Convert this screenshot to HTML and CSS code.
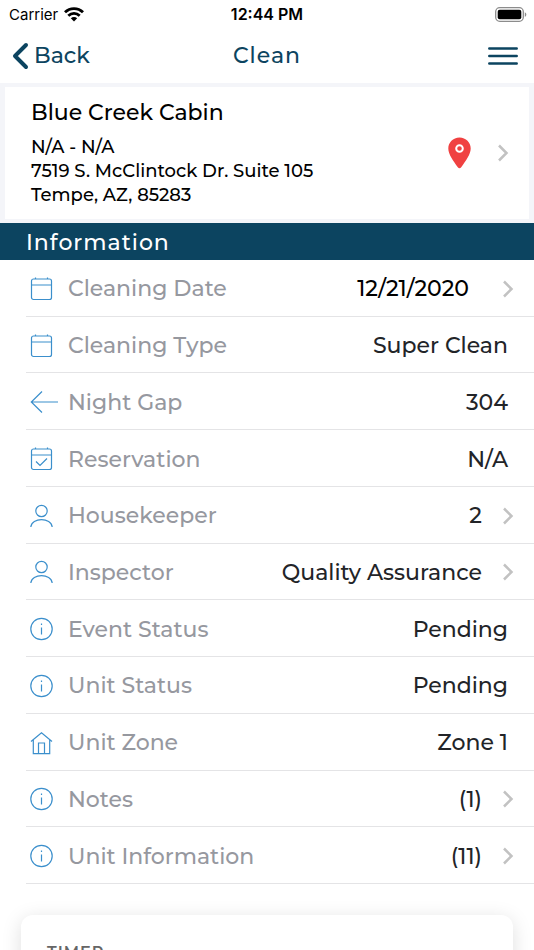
FILE: index.html
```html
<!DOCTYPE html>
<html lang="en">
<head>
    <meta charset="UTF-8">
    <meta name="viewport" content="width=device-width, initial-scale=1.0">
    <title>Clean</title>
    <link rel="stylesheet" href="styles.css">
</head>
<body>
    <!-- Shared icons -->
    <svg class="sprite" aria-hidden="true">
        <symbol id="calendar" viewBox="0 0 28 24">
            <rect x="1.500" y="2" width="20" height="20.500" rx="2"/>
            <path d="M1.500 8h20M5.500 0.500v1.500M17.500 0.500v1.500"/>
        </symbol>
        <symbol id="calendar-check" viewBox="0 0 28 24">
            <rect x="1.500" y="2" width="20" height="20.500" rx="2"/>
            <path d="M1.500 8h20M5.500 0.500v1.500M17.500 0.500v1.500M6 14.500l4 4 7-7"/>
        </symbol>
        <symbol id="arrow-left" viewBox="0 0 28 24">
            <path d="M28 12H1.500M12 1.500L1.300 12 12 22.500"/>
        </symbol>
        <symbol id="person" viewBox="0 0 28 24">
            <circle cx="11.500" cy="7" r="5.700"/>
            <path d="M0.800 23c0.800-9.800 20.600-9.800 21.400 0"/>
        </symbol>
        <symbol id="info" viewBox="0 0 28 24">
            <circle cx="11.500" cy="12" r="10.700"/>
            <path d="M11.500 10.500v7M11.500 6.500v1.600"/>
        </symbol>
        <symbol id="house" viewBox="0 0 28 24">
            <path d="M1 10.500L11.500 1.700 22 10.500M3.300 9v13.700h16.400V9M8.500 22.500V12h6v10.500"/>
        </symbol>
        <symbol id="chevron" viewBox="0 0 12 18">
            <path d="M2 1.500L9.500 9 2 16.500"/>
        </symbol>
    </svg>

    <div class="screen">
        <div class="status-bar">
            <div class="carrier">
                <span>Carrier</span>
                <svg width="20" height="15" viewBox="0 0 20 15" fill="none" stroke="#000" stroke-width="2.800" aria-hidden="true">
                    <path d="M1 5.300c5-5 13-5 18 0M4.300 8.800c3.300-3.200 8.100-3.200 11.400 0"/>
                    <path d="M10 14.500l-3.200-3.200c1.900-1.700 4.500-1.700 6.400 0z" fill="#000" stroke="none"/>
                </svg>
            </div>
            <span class="clock">12:44 PM</span>
            <svg class="battery" width="32" height="15" viewBox="0 0 32 15" aria-hidden="true">
                <rect x="0.700" y="0.700" width="27.600" height="13.600" rx="4" fill="none" stroke="#8c8c8c" stroke-width="1.300"/>
                <rect x="2.700" y="2.700" width="23.600" height="9.600" rx="2" fill="#000"/>
                <path d="M29.800 5.200c2 0.800 2 3.800 0 4.600z" fill="#8c8c8c"/>
            </svg>
        </div>

        <header class="nav-bar">
            <a class="back" href="#">
                <svg width="17" height="28" viewBox="0 0 17 28" fill="none" stroke="#0c4460" stroke-width="4" stroke-linecap="round" stroke-linejoin="round" aria-hidden="true">
                    <path d="M14 3L3 14l11 11"/>
                </svg>
                <span>Back</span>
            </a>
            <h1>Clean</h1>
            <button class="menu" type="button" aria-label="Menu">
                <svg width="30" height="20" viewBox="0 0 30 20" stroke="#0c4460" stroke-width="2.500" stroke-linecap="round" aria-hidden="true">
                    <path d="M1.300 2.500h27.400M1.300 10h27.400M1.300 17.500h27.400"/>
                </svg>
            </button>
        </header>

        <div class="unit-wrap">
            <a class="unit" href="#">
                <div class="unit-text">
                    <h2>Blue Creek Cabin</h2>
                    <p>N/A - N/A</p>
                    <p>7519 S. McClintock Dr. Suite 105</p>
                    <p>Tempe, AZ, 85283</p>
                </div>
                <svg width="23" height="32" viewBox="0 0 23 32" aria-hidden="true">
                    <path d="M11.500 0.500C5 0.500 0.300 5.500 0.300 11.500c0 6 5.200 12.500 9.500 18.800 0.900 1.300 2.500 1.300 3.400 0 4.300-6.300 9.500-12.800 9.500-18.800C22.700 5.500 18 0.500 11.500 0.500z" fill="#f04141"/>
                    <circle cx="11.500" cy="11.500" r="3.300" fill="none" stroke="#fff" stroke-width="2"/>
                </svg>
                <svg class="chevron"><use href="#chevron"/></svg>
            </a>
        </div>

        <h2 class="section-title">Information</h2>

        <ul class="info-list">
            <li>
                <a class="row" href="#">
                    <svg class="icon"><use href="#calendar"/></svg>
                    <span class="label">Cleaning Date</span>
                    <span class="value date">12/21/2020</span>
                    <svg class="chevron"><use href="#chevron"/></svg>
                </a>
            </li>
            <li>
                <div class="row">
                    <svg class="icon"><use href="#calendar"/></svg>
                    <span class="label">Cleaning Type</span>
                    <span class="value">Super Clean</span>
                </div>
            </li>
            <li>
                <div class="row">
                    <svg class="icon"><use href="#arrow-left"/></svg>
                    <span class="label">Night Gap</span>
                    <span class="value">304</span>
                </div>
            </li>
            <li>
                <div class="row">
                    <svg class="icon"><use href="#calendar-check"/></svg>
                    <span class="label">Reservation</span>
                    <span class="value">N/A</span>
                </div>
            </li>
            <li>
                <a class="row" href="#">
                    <svg class="icon"><use href="#person"/></svg>
                    <span class="label">Housekeeper</span>
                    <span class="value">2</span>
                    <svg class="chevron"><use href="#chevron"/></svg>
                </a>
            </li>
            <li>
                <a class="row" href="#">
                    <svg class="icon"><use href="#person"/></svg>
                    <span class="label">Inspector</span>
                    <span class="value">Quality Assurance</span>
                    <svg class="chevron"><use href="#chevron"/></svg>
                </a>
            </li>
            <li>
                <div class="row">
                    <svg class="icon"><use href="#info"/></svg>
                    <span class="label">Event Status</span>
                    <span class="value">Pending</span>
                </div>
            </li>
            <li>
                <div class="row">
                    <svg class="icon"><use href="#info"/></svg>
                    <span class="label">Unit Status</span>
                    <span class="value">Pending</span>
                </div>
            </li>
            <li>
                <div class="row">
                    <svg class="icon"><use href="#house"/></svg>
                    <span class="label">Unit Zone</span>
                    <span class="value">Zone 1</span>
                </div>
            </li>
            <li>
                <a class="row" href="#">
                    <svg class="icon"><use href="#info"/></svg>
                    <span class="label">Notes</span>
                    <span class="value">(1)</span>
                    <svg class="chevron"><use href="#chevron"/></svg>
                </a>
            </li>
            <li>
                <a class="row" href="#">
                    <svg class="icon"><use href="#info"/></svg>
                    <span class="label">Unit Information</span>
                    <span class="value">(11)</span>
                    <svg class="chevron"><use href="#chevron"/></svg>
                </a>
            </li>
        </ul>

        <section class="timer-card">
            <h3>TIMER</h3>
        </section>
    </div>
</body>
</html>
```
FILE: styles.css
```css
* {
    box-sizing: border-box;
}

body {
    margin: 0;
    background: white;
    color: #000;
    font-family: Montserrat, Inter, sans-serif;
}

h1, h2, h3, p, ul {
    margin: 0;
    padding: 0;
    font-weight: 500;
}

a {
    color: inherit;
    text-decoration: none;
}

svg {
    flex-shrink: 0;
}

.sprite {
    display: none;
}

.screen {
    display: flex;
    flex-direction: column;
    height: 100vh;
    overflow: hidden;
}

.screen > * {
    flex-shrink: 0;
}

/* Status bar */
.status-bar {
    display: grid;
    grid-template-columns: 1fr auto 1fr;
    align-items: center;
    height: 28px;
    padding: 0 7px;
    font-family: Inter, sans-serif;
    font-size: 15px;
}

.carrier {
    display: flex;
    align-items: center;
    gap: 6px;
    padding-left: 2px;
}

.clock {
    font-size: 16px;
    font-weight: 600;
}

.battery {
    justify-self: end;
}

/* Navigation */
.nav-bar {
    display: grid;
    grid-template-columns: 1fr auto 1fr;
    align-items: center;
    height: 55px;
    padding: 0 16px;
    color: #0c4460;
}

.back {
    display: flex;
    align-items: center;
    gap: 5px;
    margin-left: -4px;
    font-size: 22px;
    font-weight: 500;
}

.nav-bar h1 {
    font-size: 22px;
    letter-spacing: 1px;
}

.menu {
    display: flex;
    justify-self: end;
    padding: 0;
    border: none;
    background: none;
    cursor: pointer;
}

/* Unit card */
.unit-wrap {
    padding: 4px 5px;
    background: #f4f5f9;
}

.unit {
    display: flex;
    align-items: center;
    gap: 26px;
    padding: 12px 20px 12px 26px;
    background: white;
}

.unit-text {
    flex: 1;
}

.unit-text h2 {
    margin-bottom: 8px;
    font-size: 22px;
    line-height: 28px;
}

.unit-text p {
    font-size: 18px;
    line-height: 24px;
}

.chevron {
    width: 12px;
    height: 18px;
    fill: none;
    stroke: #c2c2c2;
    stroke-width: 2.5px;
}

/* Information list */
.section-title {
    padding: 2px 26px 0;
    background: #0c4460;
    color: white;
    font-size: 22px;
    line-height: 35px;
    letter-spacing: 1px;
}

.info-list {
    display: grid;
    grid-auto-rows: 1fr;
    min-height: 624px;
    list-style: none;
}

.info-list li {
    display: grid;
    margin-left: 26px;
    border-bottom: 1px solid #e4e4e6;
}

.row {
    display: flex;
    align-items: center;
    padding: 2px 26px 0 4px;
    font-size: 22px;
    font-weight: 500;
}

.row .chevron {
    margin: 0 -6px 0 20px;
}

.icon {
    width: 28px;
    height: 24px;
    margin-right: 10px;
    fill: none;
    stroke: #3b8fcc;
    stroke-width: 1.2px;
}

.label {
    flex: 1;
    color: #96989f;
}

.value {
    color: #222428;
}

.date {
    padding-right: 13px;
    color: #000;
}

/* Timer */
.timer-card {
    flex: 1 0 100px;
    margin: 31px 21px 0;
    padding: 28px 26px;
    border-radius: 12px;
    box-shadow: 0 4px 20px rgba(0, 0, 0, 0.13);
    color: #666;
}

.timer-card h3 {
    font-size: 16px;
    font-weight: 600;
    line-height: 20px;
    letter-spacing: 1px;
}
```
